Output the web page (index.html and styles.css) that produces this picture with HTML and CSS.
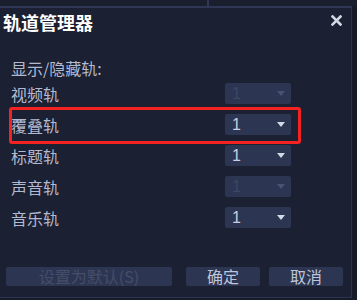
FILE: index.html
```html
<!DOCTYPE html>
<html lang="zh-CN">
<head>
    <meta charset="UTF-8">
    <title>轨道管理器</title>
    <link rel="stylesheet" href="styles.css">
</head>
<body>
    <div class="topbar">
        <div class="pane-left"></div>
        <div class="pane-right"></div>
    </div>
    <div class="dialog">
        <header class="title-bar">
            <h1>轨道管理器</h1>
            <svg class="close" width="11" height="11" viewBox="0 0 11 11">
                <path d="M1.5 1.5 L9.5 9.5 M9.5 1.5 L1.5 9.5" stroke="#d3d7e3" stroke-width="2.6" stroke-linecap="square"/>
            </svg>
        </header>
        <section class="content">
            <div class="section-label">显示/隐藏轨:</div>
            <div class="row">
                <span class="label">视频轨</span>
                <div class="select disabled"><span>1</span><i class="arrow"></i></div>
            </div>
            <div class="row">
                <span class="label">覆叠轨</span>
                <div class="select"><span>1</span><i class="arrow"></i></div>
                <div class="highlight"></div>
            </div>
            <div class="row">
                <span class="label">标题轨</span>
                <div class="select"><span>1</span><i class="arrow"></i></div>
            </div>
            <div class="row">
                <span class="label">声音轨</span>
                <div class="select disabled"><span>1</span><i class="arrow"></i></div>
            </div>
            <div class="row">
                <span class="label">音乐轨</span>
                <div class="select"><span>1</span><i class="arrow"></i></div>
            </div>
        </section>
        <footer class="buttons">
            <button class="btn btn-default" disabled>设置为默认(S)</button>
            <button class="btn btn-ok">确定</button>
            <button class="btn btn-cancel">取消</button>
        </footer>
    </div>
</body>
</html>
```

FILE: styles.css
```css
body {
    margin: 0;
    padding: 0;
    background-color: #171b28;
    font-family: "Noto Sans CJK SC", "Liberation Sans", sans-serif;
    color: #b3bad0;
    overflow: hidden;
}

.topbar {
    display: flex;
    height: 6px;
}

.pane-left {
    width: 207px;
    border-right: 2px solid #2f3656;
    background-color: #1a1f2e;
}

.pane-right {
    flex: 1;
    background-color: #1a1f2e;
}

.dialog {
    width: 351px;
    height: 289px;
    background-color: #1b2032;
    border-top: 2px solid #2f3656;
    border-right: 1px solid #2c3350;
    border-bottom: 1px solid #2c3350;
    display: flex;
    flex-direction: column;
}

.title-bar {
    display: flex;
    justify-content: space-between;
    align-items: center;
    height: 28px;
    padding: 0 9px 0 3px;
}

.title-bar h1 {
    margin: 0;
    font-size: 18px;
    font-weight: bold;
    color: #ffffff;
    line-height: 28px;
}

.close {
    margin-top: -4px;
}

.content {
    padding-left: 11px;
    padding-top: 22px;
}

.section-label {
    height: 20px;
    line-height: 20px;
    font-size: 16px;
}

.row {
    position: relative;
    display: flex;
    align-items: center;
    height: 31px;
}

.label {
    width: 214px;
    font-size: 16px;
}

.select {
    display: flex;
    align-items: center;
    justify-content: space-between;
    width: 66px;
    height: 21px;
    box-sizing: border-box;
    padding: 0 6px 0 7px;
    background-color: #2c3551;
    border-radius: 2px;
    color: #c6cde2;
    font-family: "Liberation Sans", sans-serif;
    font-size: 16px;
}

.arrow {
    width: 0;
    height: 0;
    border-left: 4px solid transparent;
    border-right: 4px solid transparent;
    border-top: 5px solid #d4d9e6;
}

.select.disabled {
    color: #3d4765;
}

.select.disabled .arrow {
    border-top-color: #485272;
}

.highlight {
    position: absolute;
    left: -2px;
    top: -2px;
    width: 286px;
    height: 31px;
    border: 3px solid #f52222;
    border-radius: 3px;
}

.buttons {
    display: flex;
    padding: 34px 0 0 6px;
}

.btn {
    height: 19px;
    padding: 0;
    border: none;
    border-radius: 2px;
    background-color: #2c3552;
    color: #bec5da;
    font-family: "Noto Sans CJK SC", sans-serif;
    font-size: 16px;
    line-height: 19px;
}

.btn-default {
    width: 166px;
    color: #464e69;
}

.btn-ok {
    width: 74px;
    margin-left: 14px;
}

.btn-cancel {
    width: 74px;
    margin-left: 9px;
}
```
